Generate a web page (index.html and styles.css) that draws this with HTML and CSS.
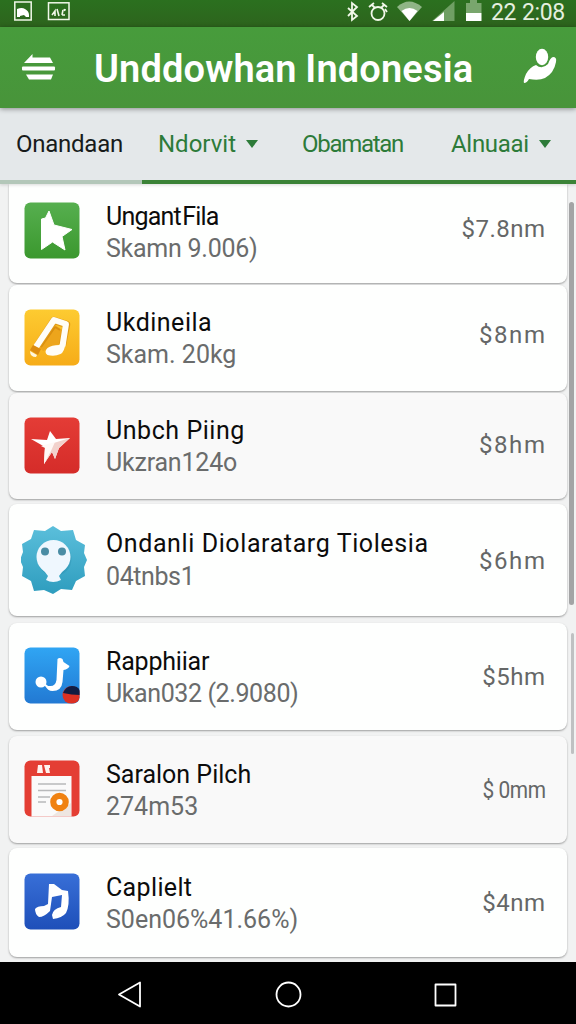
FILE: index.html
```html
<!DOCTYPE html>
<html lang="id">
<head>
<meta charset="utf-8">
<title>Unddowhan Indonesia</title>
<link rel="stylesheet" href="styles.css">
</head>
<body>
<div class="screen">
  <div class="status">
    <svg class="status-left" width="60" height="27" viewBox="0 0 60 27" fill="none" stroke="#f1f8e9" stroke-width="1.5">
      <rect x="4.800" y="2" width="16.400" height="18"/>
      <path d="M7 17V9q5-2 8 0 4 2 4 6v2h-3l-2-2-4 1v1z" fill="#fff" stroke="none"/>
      <rect x="38.500" y="2.800" width="20.500" height="16.700"/>
      <path d="M42 15l3-4v5M47 9l2 7M52 15l1-5M54 9l1 2M55 9v1M52 15h3" stroke-width="1.600"/>
    </svg>
    <svg class="status-right" width="140" height="27" viewBox="0 0 140 27" fill="none" stroke="#f1f8e9" stroke-width="1.800">
      <path d="M2 8l9 8-5 4V3l5 4-9 9"/>
      <circle cx="32" cy="13.500" r="6.500"/><path d="M23 7l5-4M36 3l5 4M26 5l3 3M35 8l3-3M39 9l2 3"/>
      <path d="M51 7Q63-4 76 7L63.500 21z" fill="#8fb586" stroke="none"/>
      <path d="M55.500 11q8-6 16 0l-8 10z" fill="#fff" stroke="none"/>
      <path d="M86 21L108.500 1v20z" fill="#6f9f63" stroke="none"/>
      <path d="M87 21l11-9v9z" fill="#fff" stroke="none"/>
      <path d="M120 3h4V0h7v3h4.500v10H120z" fill="#79a66d" stroke="none"/>
      <path d="M120 13h15.500v8H120z" fill="#fff" stroke="none"/>
    </svg>
    <span class="clock"><span class="clock-a">22</span><span class="clock-b">2:08</span></span>
  </div>
  <header class="appbar">
    <svg class="menu-icon" width="36" height="30" viewBox="0 0 36 30" fill="#fff">
      <path d="M4 10L12.500 1v3.500H30l3 5.500z"/><rect x="2" y="13.500" width="33" height="4" rx="1"/><path d="M6 21.500h27l-2 5H9z"/>
    </svg>
    <h1 class="title">Unddowhan Indonesia</h1>
    <svg class="person-icon" width="34" height="36" viewBox="0 0 34 36" fill="#fff">
      <ellipse cx="19" cy="9" rx="6.200" ry="8.200"/>
      <path d="M1 35Q0 33 3 26Q7 19 13 17Q19 22 25 16Q27 10 30 9Q34 9 33 14Q31 25 22 30Q16 33 6 31Q4 35 1 35z"/>
    </svg>
  </header>
  <nav class="tabs">
    <span class="tab tab-current">Onandaan</span>
    <span class="tab tab-b">Ndorvit<i class="caret"></i></span>
    <span class="tab tab-c">Obamatan</span>
    <span class="tab tab-d">Alnuaai<i class="caret"></i></span>
  </nav>
  <main class="list">
    <article class="card c1">
      <svg class="icon" viewBox="0 0 56 57">
        <defs><linearGradient id="g1" x2="0" y2="1"><stop stop-color="#56af4f"/><stop offset="1" stop-color="#3b982e"/></linearGradient></defs>
        <rect x=".5" y=".5" width="55" height="56" rx="6" fill="url(#g1)"/>
        <path d="M25 9l5 14 18 4.500-10 7 3 13.500-12.500-8-11 7.500V17l4-1z" fill="#fff" stroke="#fff" stroke-linejoin="round"/>
      </svg>
      <div class="text"><h2 class="name">Ungant Fila</h2><p class="sub">Skamn 9.006)</p></div>
      <span class="price">$7.8nm</span>
    </article>
    <article class="card c2">
      <svg class="icon" viewBox="0 0 56 57">
        <defs><linearGradient id="g2" x2="0" y2="1"><stop stop-color="#fdcb31"/><stop offset="1" stop-color="#f6ac18"/></linearGradient></defs>
        <rect x=".5" y=".5" width="55" height="56" rx="6" fill="url(#g2)"/>
        <path d="M31 16l7 5-2 14-9 3-8 4-7-7z" fill="#eda51c"/>
        <path d="M31 18l-14 20M31 18l5 3" stroke="#d98e10" stroke-width="2" fill="none"/>
        <path d="M14 36L30 11.500l12.500 4L38.500 36" fill="none" stroke="#e09a15" stroke-width="7.500" stroke-linejoin="round"/>
        <path d="M12 38L30 11l12 4L38.500 37" fill="none" stroke="#fffdf7" stroke-width="6" stroke-linejoin="round"/>
        <path d="M41.500 34q-1 9-5 11-6 3-13 1-4-3 0-7 4-3 12-3l2-5z" fill="#fffdf7"/>
        <path d="M9 36l8 4-3 6-8-5z" fill="#dc8b10"/><path d="M6 42l7 4-1 2q-6 0-6-6" fill="#fff6df"/>
      </svg>
      <div class="text"><h2 class="name">Ukdineila</h2><p class="sub">Skam. 20kg</p></div>
      <span class="price">$8nm</span>
    </article>
    <article class="card c3 alt">
      <svg class="icon" viewBox="0 0 56 57">
        <defs><linearGradient id="g3" x2="0" y2="1"><stop stop-color="#e43c36"/><stop offset="1" stop-color="#d52c29"/></linearGradient></defs>
        <rect x=".5" y=".5" width="55" height="56" rx="6" fill="url(#g3)"/>
        <path d="M7 22l16 1 3-9 6 8 14-1-11 10-4 11-3-7-8 12 1-17z" fill="#fff"/>
        <path d="M20 29l26-8-11 10-4 11-3-7-8 12 1-17z" fill="#f2d2cc"/><path d="M17 29l14-4-4 9-7 13 1-16z" fill="#fff9f6"/>
      </svg>
      <div class="text"><h2 class="name">Unbch Piing</h2><p class="sub">Ukzran124o</p></div>
      <span class="price">$8hm</span>
    </article>
    <article class="card c4">
      <svg class="icon icon-badge" viewBox="0 0 66 68">
        <defs><linearGradient id="g4" x2="0" y2="1"><stop stop-color="#5bbfdb"/><stop offset="1" stop-color="#2e9dbe"/></linearGradient></defs>
        <path d="M32 0l8 5 12-1 3 10 9 5-1 8 3 7-3 7 1 9-9 5-4 9-11-1-8 5-9-4-10 1-3-10-9-5 1-9-3-7 3-8-1-8 9-5 3-9 11 1z" fill="url(#g4)"/>
        <circle cx="33.500" cy="33" r="17" fill="#207f9e" opacity=".25"/>
        <path d="M17 37L27 50l-2 4q7 4 15 0l-2-4L48 37z" fill="#eff7fe"/>
        <circle cx="32.500" cy="31" r="17" fill="#eff7fe"/>
        <circle cx="24" cy="25.500" r="4" fill="#4a8ca4"/><circle cx="41" cy="25.500" r="4" fill="#4a8ca4"/>
      </svg>
      <div class="text"><h2 class="name">Ondanli Diolaratarg Tiolesia</h2><p class="sub">04tnbs1</p></div>
      <span class="price">$6hm</span>
    </article>
    <article class="card c5">
      <svg class="icon" viewBox="0 0 56 57">
        <defs><linearGradient id="g5" x2="0" y2="1"><stop stop-color="#30a5f3"/><stop offset="1" stop-color="#2279d3"/></linearGradient>
        <clipPath id="k5"><rect x=".5" y=".5" width="55" height="56" rx="6"/></clipPath></defs>
        <rect x=".5" y=".5" width="55" height="56" rx="6" fill="url(#g5)"/>
        <path d="M33.500 12q2-2 5 0l1 3 6 4q-1 3-6 4l-1 12q-1 9-10 9-5 0-7-5h5q5 0 6-6z" fill="#fff"/>
        <circle cx="17" cy="35" r="5.500" fill="#fff"/>
        <path d="M20 37l5 4" stroke="#fff" stroke-width="2"/>
        <g clip-path="url(#k5)"><circle cx="47.500" cy="48" r="9" fill="#dc3023"/><path d="M39 46q3-7 9-7 7 0 9 7v2q-9 0-18-2" fill="#111c42"/></g>
      </svg>
      <div class="text"><h2 class="name">Rapphiiar</h2><p class="sub">Ukan032 (2.9080)</p></div>
      <span class="price">$5hm</span>
    </article>
    <article class="card c6 alt">
      <svg class="icon" viewBox="0 0 56 57">
        <rect x=".5" y=".5" width="55" height="56" rx="6" fill="#e43e34"/>
        <path d="M14 5h4l1 8h-6zM20 5h6v3h-1l1 5h-4z" fill="#fff3ef"/>
        <path d="M7.500 16h40v40.500h-40z" fill="#fafafa"/><path d="M28 56l7-5 12-8v13z" fill="#eee6e1"/>
        <path d="M14 24h28M14 30.500h28M14 37h12M14 42h8" stroke="#b8b9ba" stroke-width="1.300"/>
        <circle cx="35.500" cy="42" r="6.200" fill="#fff" stroke="#f08212" stroke-width="6.200"/>
      </svg>
      <div class="text"><h2 class="name">Saralon Pilch</h2><p class="sub">274m53</p></div>
      <span class="price">$ 0mm</span>
    </article>
    <article class="card c7">
      <svg class="icon" viewBox="0 0 56 57">
        <defs><linearGradient id="g7" x2="0" y2="1"><stop stop-color="#386fd7"/><stop offset="1" stop-color="#1e4fb9"/></linearGradient></defs>
        <rect x=".5" y=".5" width="55" height="56" rx="6" fill="url(#g7)"/>
        <path d="M25 11h5l8 6 6 1q2 14-2 22-4 5-13 6l-1-4q1-6 9-8l1-12-10 2-2 14q-6 6-11 6-4-3-4-8 2-3 9-3l4-2z" fill="#fff"/>
      </svg>
      <div class="text"><h2 class="name">Caplielt</h2><p class="sub">S0en06%41.66%)</p></div>
      <span class="price">$4nm</span>
    </article>
    <div class="scroll scroll-main"></div>
    <div class="scroll scroll-sub"></div>
  </main>
  <footer class="navbar">
    <svg width="576" height="62" viewBox="0 0 576 62" fill="none" stroke="#fff" stroke-width="1.800" stroke-linejoin="round">
      <path d="M119 32.500l21-12v24z"/><circle cx="288.500" cy="32.500" r="12"/><rect x="435.500" y="22.500" width="20" height="21"/>
    </svg>
  </footer>
</div>
</body>
</html>
```
FILE: styles.css
```css
* { box-sizing: border-box; margin: 0; padding: 0; }
body { font-family: Roboto, "Liberation Sans", sans-serif; background: #f1f2f2; }
.screen { width: 576px; height: 1024px; display: flex; flex-direction: column; overflow: hidden; }
.screen svg { display: block; flex: none; }
.status { height: 27px; flex: none; display: flex; align-items: flex-start; padding-left: 10px; background: linear-gradient(#2b701f, #2d641d); color: #e4efdf; }
.status-right { margin-left: 276px; }
.clock { margin-left: 5px; display: flex; gap: 6px; font-size: 23px; line-height: 26px; letter-spacing: -.4px; white-space: nowrap; }
.appbar { height: 81px; flex: none; display: flex; align-items: center; padding-left: 20px; background: linear-gradient(#479c3c, #48943a); color: #fff; position: relative; z-index: 2; box-shadow: 0 1px 5px rgba(0,0,0,.4); }
.title { width: 428px; margin-left: 38px; font-size: 38px; line-height: 46px; font-weight: 600; letter-spacing: .15px; word-spacing: -1px; white-space: nowrap; padding-top: 2px; }
.person-icon { margin: 0 0 3px 1px; }
.tabs { height: 76px; flex: none; display: grid; grid-template-columns: 142px 144px 148px 142px; background: #e4e8ea; position: relative; z-index: 1; box-shadow: 0 1px 3px rgba(0,0,0,.15); }
.tab { display: flex; align-items: center; padding: 2px 0 2px 16px; border-bottom: 4px solid #3b8337; color: #2d7b39; font-size: 24px; white-space: nowrap; }
.tab-current { color: #171b1b; border-color: #b3c7b9; letter-spacing: -.25px; }
.tab-c { letter-spacing: -1.3px; }
.tab-d { padding-left: 17px; letter-spacing: -.3px; }
.caret { margin-left: 10px; border: 6px solid transparent; border-top: 8px solid #2d7b39; border-bottom: 0; }
.list { height: 778px; flex: none; position: relative; padding: 0 9px; }
.card { display: flex; align-items: center; padding: 0 22px 0 15px; background: #fefffe; border-radius: 8px; box-shadow: 0 1px 2px rgba(0,0,0,.35); }
.alt { background: #f9f9f9; }
.icon { width: 56px; height: 57px; margin-bottom: 2px; }
.icon-badge { width: 66px; height: 68px; margin: 0 -7px 0 -3px; }
.text { flex: 1; margin-left: 26px; padding-top: 2px; white-space: nowrap; }
.name, .sub { font-size: 25px; line-height: 32px; font-weight: 400; }
.name { color: #0c0c0c; }
.sub { color: #6a6c6c; }
.price { color: #656767; font-size: 24px; white-space: nowrap; }

.c1 { height: 99px; padding-bottom: 4px; border-radius: 0 0 8px 8px; }
.c1 .name { letter-spacing: -.8px; word-spacing: -4px; }
.c1 .sub { letter-spacing: -.25px; }
.c1 .price { letter-spacing: .5px; margin: 0 -.5px 6px 0; }

.c2 { height: 106px; margin-top: 2px; }
.c2 .name { letter-spacing: .5px; }
.c2 .price { letter-spacing: 1.6px; margin: 0 -1.6px 6px 0; }

.c3 { height: 106px; margin-top: 2px; }
.c3 .name { letter-spacing: .55px; }
.c3 .sub { letter-spacing: -.2px; }
.c3 .price { letter-spacing: 1.6px; margin: 0 -1.6px 3px 0; }

.c4 { height: 112px; margin-top: 5px; }
.c4 .text { padding-top: 0; }
.c4 .name { letter-spacing: .6px; line-height: 34px; }
.c4 .sub { letter-spacing: -.4px; }
.c4 .price { letter-spacing: 1.6px; margin: 2px -1.6px 0 0; }

.c5 { height: 107px; margin-top: 7px; }
.c5 .name { letter-spacing: -.2px; }
.c5 .sub { letter-spacing: -.4px; }
.c5 .price { letter-spacing: .5px; margin-right: -.5px; }

.c6 { height: 107px; margin-top: 6px; }
.c6 .price { letter-spacing: -.5px; margin-right: -.5px; transform: scaleX(.87); transform-origin: right; }

.c7 { height: 109px; margin-top: 5px; }
.c7 .name { letter-spacing: .35px; }
.c7 .price { letter-spacing: .5px; margin-right: -.5px; }

.scroll { position: absolute; background: #a3a4a5; border-radius: 3px; }
.scroll-main { left: 569px; top: 18px; width: 5px; height: 403px; }
.scroll-sub { left: 571px; top: 449px; width: 3px; height: 121px; background: #bfc1c2; }
.navbar { height: 62px; flex: none; background: #000; }
```
